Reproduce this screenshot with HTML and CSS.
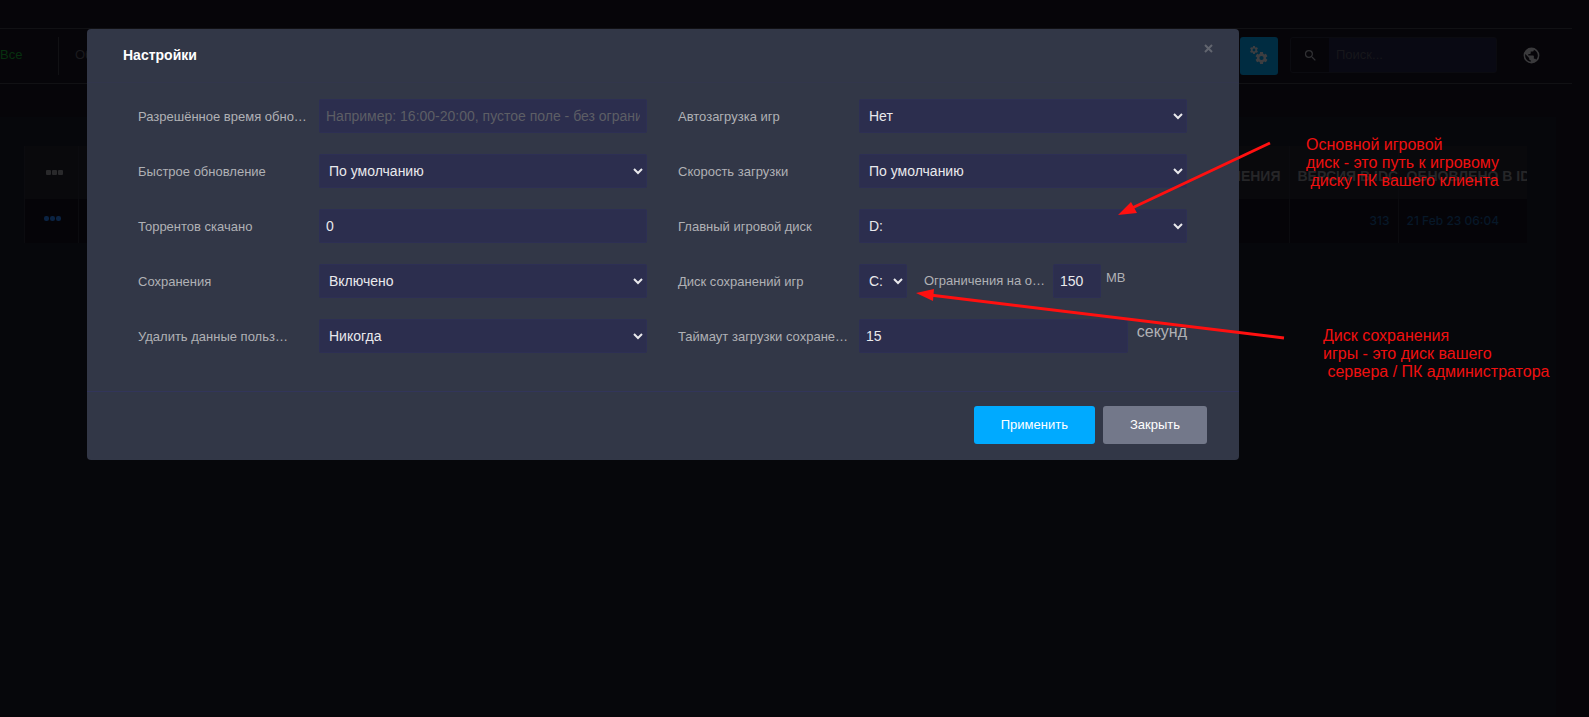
FILE: index.html
```html
<!DOCTYPE html>
<html lang="ru">
<head>
<meta charset="utf-8">
<title>Настройки</title>
<link rel="stylesheet" href="styles.css">
</head>
<body>
<svg class="defs" aria-hidden="true">
  <symbol id="cog" viewBox="2 2 20 20"><path d="M12,15.5A3.5,3.5 0 0,1 8.5,12A3.5,3.5 0 0,1 12,8.5A3.5,3.5 0 0,1 15.5,12A3.5,3.5 0 0,1 12,15.5M19.43,12.97C19.47,12.65 19.5,12.33 19.5,12C19.5,11.67 19.47,11.34 19.43,11L21.54,9.37C21.73,9.22 21.78,8.95 21.66,8.73L19.66,5.27C19.54,5.05 19.27,4.96 19.05,5.05L16.56,6.05C16.04,5.66 15.5,5.32 14.87,5.07L14.5,2.42C14.46,2.18 14.25,2 14,2H10C9.75,2 9.54,2.18 9.5,2.42L9.13,5.07C8.5,5.32 7.96,5.66 7.44,6.05L4.95,5.05C4.73,4.96 4.46,5.05 4.34,5.27L2.34,8.73C2.21,8.95 2.27,9.22 2.46,9.37L4.57,11C4.53,11.34 4.5,11.67 4.5,12C4.5,12.33 4.53,12.65 4.57,12.97L2.46,14.63C2.27,14.78 2.21,15.05 2.34,15.27L4.34,18.73C4.46,18.95 4.73,19.03 4.95,18.95L7.44,17.94C7.96,18.34 8.5,18.68 9.13,18.93L9.5,21.58C9.54,21.82 9.75,22 10,22H14C14.25,22 14.46,21.82 14.5,21.58L14.87,18.93C15.5,18.67 16.04,18.34 16.56,17.94L19.05,18.95C19.27,19.03 19.54,18.95 19.66,18.73L21.66,15.27C21.78,15.05 21.73,14.78 21.54,14.63L19.43,12.97Z"/></symbol>
</svg>

<div class="page">
  <header class="toolbar">
    <nav class="tabs">
      <a class="tab tab-active" href="#all">Все</a>
      <a class="tab" href="#updates">Об</a>
    </nav>
    <div class="tools">
      <button class="gear" type="button" aria-label="Настройки">
        <svg width="18" height="20" viewBox="0 0 18 20"><use href="#cog" x="0" y="0" width="8" height="8"/><use href="#cog" x="5" y="6" width="13" height="12"/></svg>
      </button>
      <div class="search">
        <span class="search-icon"><svg width="15" height="15" viewBox="0 0 24 24"><path d="M9.5,3A6.5,6.5 0 0,1 16,9.5C16,11.11 15.41,12.59 14.44,13.73L14.71,14H15.5L20.5,19L19,20.5L14,15.5V14.71L13.73,14.44C12.59,15.41 11.11,16 9.5,16A6.5,6.5 0 0,1 3,9.5A6.5,6.5 0 0,1 9.5,3M9.5,5C7,5 5,7 5,9.5C5,12 7,14 9.5,14C12,14 14,12 14,9.5C14,7 12,5 9.5,5Z"/></svg></span>
        <input class="search-input" type="text" placeholder="Поиск..." aria-label="Поиск">
      </div>
      <button class="globe" type="button" aria-label="Язык">
        <svg width="19" height="19" viewBox="0 0 24 24"><path d="M17.9,17.39C17.64,16.59 16.89,16 16,16H15V13A1,1 0 0,0 14,12H8V10H10A1,1 0 0,0 11,9V7H13A2,2 0 0,0 15,5V4.59C17.93,5.77 20,8.64 20,12C20,14.08 19.2,15.97 17.9,17.39M11,19.93C7.05,19.44 4,16.08 4,12C4,11.38 4.08,10.78 4.21,10.21L9,15V16A2,2 0 0,0 11,18M12,2A10,10 0 0,0 2,12A10,10 0 0,0 12,22A10,10 0 0,0 22,12A10,10 0 0,0 12,2Z"/></svg>
      </button>
    </div>
  </header>
  <main class="card">
    <table class="games">
      <colgroup><col class="col-menu"><col><col class="col-version"><col class="col-updated"></colgroup>
      <thead>
        <tr>
          <th class="menu-head"><svg class="dots" width="17" height="5" viewBox="0 0 17 5"><rect width="5" height="5" rx="1"/><rect x="6" width="5" height="5" rx="1"/><rect x="12" width="5" height="5" rx="1"/></svg></th>
          <th class="right">ОБНОВЛЕНИЯ</th>
          <th>ВЕРСИЯ В IDC</th>
          <th>ОБНОВЛЕНО В IDC</th>
        </tr>
      </thead>
      <tbody>
        <tr>
          <td class="menu-cell"><svg class="dots dots-blue" width="17" height="5" viewBox="0 0 17 5"><rect width="5" height="5" rx="2"/><rect x="6" width="5" height="5" rx="2"/><rect x="12" width="5" height="5" rx="2"/></svg></td>
          <td></td>
          <td class="right">313</td>
          <td>21 Feb 23 06:04</td>
        </tr>
      </tbody>
    </table>
  </main>
</div>

<div class="overlay">
  <section class="modal" role="dialog" aria-labelledby="title">
    <header class="modal-head">
      <h1 class="title" id="title">Настройки</h1>
      <button class="close" type="button" aria-label="Закрыть окно"><svg width="9" height="9" viewBox="0 0 9 9"><path d="M1 1l7 7M8 1l-7 7"/></svg></button>
    </header>
    <form class="form" id="settings">
      <div class="row"><label class="label" for="time">Разрешённое время обно…</label><input class="field" id="time" type="text" placeholder="Например: 16:00-20:00, пустое поле - без ограничений"></div>
      <div class="row"><label class="label" for="auto">Автозагрузка игр</label><select class="field" id="auto"><option>Нет</option></select></div>
      <div class="row"><label class="label" for="fast">Быстрое обновление</label><select class="field" id="fast"><option>По умолчанию</option></select></div>
      <div class="row"><label class="label" for="speed">Скорость загрузки</label><select class="field" id="speed"><option>По умолчанию</option></select></div>
      <div class="row"><label class="label" for="torrents">Торрентов скачано</label><input class="field" id="torrents" type="text" value="0"></div>
      <div class="row"><label class="label" for="main-disk">Главный игровой диск</label><select class="field" id="main-disk"><option>D:</option></select></div>
      <div class="row"><label class="label" for="saves">Сохранения</label><select class="field" id="saves"><option>Включено</option></select></div>
      <div class="row"><label class="label" for="save-disk">Диск сохранений игр</label>
        <div class="group">
          <select class="field small" id="save-disk"><option>C:</option></select>
          <label class="label limit-label" for="limit">Ограничения на о…</label>
          <input class="field small" id="limit" type="text" value="150">
          <span class="unit">MB</span>
        </div>
      </div>
      <div class="row"><label class="label" for="remove">Удалить данные польз…</label><select class="field" id="remove"><option>Никогда</option></select></div>
      <div class="row"><label class="label" for="timeout">Таймаут загрузки сохране…</label>
        <div class="group">
          <input class="field grow" id="timeout" type="text" value="15">
          <span class="unit unit-large">секунд</span>
        </div>
      </div>
    </form>
    <footer class="modal-foot">
      <button class="btn btn-primary" type="submit" form="settings">Применить</button>
      <button class="btn btn-muted" type="button">Закрыть</button>
    </footer>
  </section>
</div>

<svg class="arrows" width="1589" height="717" viewBox="0 0 1589 717" aria-hidden="true">
  <path class="shaft" d="M1270 143L1132 208M1284 338L930 295"/>
  <path class="head" d="M1118 215L1131 202L1137 213ZM916 293L934 289L933 301Z"/>
</svg>
<p class="note note-main">Основной игровой
диск - это путь к игровому
 диску ПК вашего клиента</p>
<p class="note note-saves">Диск сохранения
игры - это диск вашего
 сервера / ПК администратора</p>
</body>
</html>
```
FILE: styles.css
```css
* { box-sizing: border-box; }

body {
  margin: 0;
  min-height: 100vh;
  position: relative;
  overflow: hidden;
  background: #060509;
  color: #b0b1b5;
  font: 14px/20px "Liberation Sans", Arial, sans-serif;
}

button, input, select { font: inherit; }
button { border: 0; padding: 0; cursor: pointer; }

.defs { position: absolute; width: 0; height: 0; }

/* Page behind the dialog */
.page {
  display: flex;
  flex-direction: column;
  min-height: 100vh;
  padding: 28px 0 2px;
}

.toolbar {
  display: flex;
  justify-content: space-between;
  align-items: flex-start;
  height: 56px;
  margin-right: 17px;
  padding-top: 8px;
  border-top: 1px solid #111114;
  border-bottom: 1px solid #111114;
}

.tabs { display: flex; }
.tab {
  height: 38px;
  padding: 0 16px;
  line-height: 36px;
  color: #1b1b1e;
  font-size: 13px;
  text-decoration: none;
}
.tab-active {
  width: 59px;
  padding: 0;
  border-right: 1px solid #111114;
  color: #06300f;
}

.tools { display: flex; }
.gear {
  display: grid;
  place-items: center;
  width: 38px;
  height: 38px;
  border-radius: 3px;
  background: #002c41;
  fill: #3d3e41;
}
.search {
  display: flex;
  width: 207px;
  height: 36px;
  margin-left: 12px;
  border: 1px solid #0b0b10;
  border-radius: 3px;
}
.search-icon {
  display: grid;
  place-items: center;
  width: 38px;
  fill: #303033;
}
.search-input {
  flex: 1;
  min-width: 0;
  padding: 0 7px;
  border: 0;
  background: #090913;
  color: #3a3a3a;
  font-size: 13px;
}
.search-input::placeholder { color: #17171b; }
.globe {
  display: grid;
  place-items: center;
  width: 40px;
  height: 36px;
  margin: 0 21px 0 14px;
  background: none;
  fill: #3a3a3c;
}

.card {
  flex: 1;
  margin: 33px 33px 0 0;
  padding: 29px 29px 0 24px;
  background: #06070b;
}

.games {
  width: 100%;
  table-layout: fixed;
  border-collapse: collapse;
}
.col-menu { width: 54px; }
.col-version { width: 109px; }
.col-updated { width: 129px; }
.games th, .games td {
  padding: 0 8px;
  border-left: 1px solid #0b0b0f;
  overflow: hidden;
  text-align: left;
  white-space: nowrap;
}
.games th {
  height: 53px;
  padding-top: 6px;
  background: #09090c;
  color: #262628;
}
.games td {
  height: 44px;
  background: #050408;
  color: #071828;
  font: 500 12px/20px Inter, sans-serif;
}
.games .right { text-align: right; }
.dots { display: inline-block; fill: #29292b; vertical-align: middle; }
.dots-blue { fill: #0b2342; }
.games .menu-head { padding: 0 0 2px 21px; }
.games .menu-cell { padding: 0 0 7px 19px; }

/* Dialog */
.overlay {
  position: absolute;
  inset: 0;
  padding: 29px 350px 0 87px;
}
.modal {
  border-radius: 4px;
  background: #323747;
}
.modal-head {
  display: flex;
  justify-content: space-between;
  align-items: flex-start;
  height: 54px;
  padding: 15px 26px 0 36px;
  border-bottom: 1px solid #32364c;
}
.title {
  margin: 0;
  color: #fff;
  font-size: 14px;
  line-height: 22px;
}
.close { height: 9px; background: none; display: flex; }
.close path { stroke: #62656f; stroke-width: 2; }

.form {
  display: grid;
  grid-template-columns: 1fr 1fr;
  gap: 21px 31px;
  padding: 16px 52px 38px 51px;
}
.row {
  display: grid;
  grid-template-columns: 1fr 2fr;
  gap: 17px;
  align-items: center;
  height: 34px;
}
.label {
  min-width: 0;
  padding-top: 2px;
  font-size: 13px;
  white-space: nowrap;
}
.field {
  width: 100%;
  min-width: 0;
  height: 34px;
  padding: 0 6px;
  border: 1px solid #2d2f54;
  border-radius: 2px;
  background: #2c2e4e;
  color: #e9e9ec;
}
select.field { padding: 0 5px; }
.field::placeholder { color: #5d5e65; }
.group { display: flex; min-width: 0; height: 34px; }
.group .small { flex: none; width: 48px; }
.group .grow { flex: 1; }
.limit-label {
  flex: 1;
  margin: 0 14px 0 17px;
  line-height: 30px;
}
.unit {
  flex: none;
  width: 86px;
  padding: 4px 0 0 5px;
  font-size: 13px;
}
.unit-large {
  width: auto;
  padding: 3px 0 0 9px;
  font-size: 16px;
}

.modal-foot {
  display: flex;
  justify-content: flex-end;
  gap: 8px;
  padding: 14px 32px 16px;
  border-top: 1px solid #32355a;
}
.btn {
  height: 38px;
  padding: 0 27px;
  border-radius: 3px;
  color: #fff;
  font-size: 13px;
}
.btn-primary { background: #00aaff; }
.btn-muted { background: #73788a; }

/* Annotations drawn over everything */
.arrows { position: absolute; left: 0; top: 0; }
.shaft { fill: none; stroke: #ff1010; stroke-width: 3; }
.head { fill: #ff1010; }
.note {
  position: absolute;
  margin: 0;
  color: #f01010;
  font-size: 16px;
  line-height: 18px;
  white-space: pre;
}
.note-main { left: 1306px; top: 136px; }
.note-saves { left: 1323px; top: 327px; }
```
